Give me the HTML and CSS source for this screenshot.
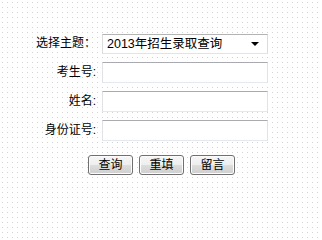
FILE: index.html
```
<!DOCTYPE html>
<html lang="zh-CN">
<head>
<meta charset="utf-8">
<title>录取查询</title>
<link rel="stylesheet" href="styles.css">
</head>
<body>
<form class="query">
  <div class="fields">
    <label class="lbl">选择主题：</label>
    <div class="select">
      <span class="select-text">2013年招生录取查询</span>
      <span class="arrow"></span>
    </div>
    <label class="lbl">考生号:</label>
    <input class="field" type="text">
    <label class="lbl">姓名:</label>
    <input class="field" type="text">
    <label class="lbl">身份证号:</label>
    <input class="field" type="text">
  </div>
  <div class="actions">
    <button type="button" class="btn">查询</button>
    <button type="button" class="btn">重填</button>
    <button type="button" class="btn">留言</button>
  </div>
</form>
</body>
</html>
```
FILE: styles.css
```
html, body {
  margin: 0;
  padding: 0;
  width: 322px;
  height: 202px;
  overflow: hidden;
}
body {
  background-color: #fff;
  background-image: conic-gradient(at 1px 1px, transparent 75%, #d2d2d2 0);
  background-size: 5px 5px;
  background-position: 2px 2px;
  font-family: "Liberation Sans", "Noto Sans CJK SC", sans-serif;
  font-size: 12px;
  color: #000;
}
.query {
  margin: 0;
  padding-top: 33px;
}
.fields {
  display: grid;
  grid-template-columns: 90px 166px;
  column-gap: 6px;
  row-gap: 8px;
  padding-left: 6px;
  align-items: center;
}
.lbl {
  text-align: right;
  line-height: 21px;
  white-space: nowrap;
}
.select, .field {
  box-sizing: border-box;
  height: 21px;
  width: 166px;
  margin: 0;
  border: 1px solid;
  border-color: #a9abb1 #e0e2e8 #e3e9ef #e0e2e8;
  background: #fff;
}
.select {
  display: flex;
  align-items: center;
  justify-content: space-between;
  padding: 0 8px 0 4px;
  border-color: #b3b3b3 #dcdcdc #e3e3e3 #dcdcdc;
  height: 20px;
}
.select-text {
  line-height: 18px;
  font-size: 12.5px;
}
.arrow {
  width: 0;
  height: 0;
  border-left: 4px solid transparent;
  border-right: 4px solid transparent;
  border-top: 4px solid #000;
  margin-top: 1px;
}
.field {
  padding: 0 3px;
  font: inherit;
  outline: none;
}
.actions {
  display: flex;
  justify-content: center;
  gap: 6px;
  margin-top: 14px;
  padding-left: 1px;
}
.btn {
  box-sizing: border-box;
  width: 45px;
  height: 20px;
  margin: 0;
  padding: 0;
  border: 1px solid #707070;
  border-radius: 3px;
  background: linear-gradient(#f6f6f6 0%, #eeeeee 50%, #dddddd 51%, #cfcfcf 100%);
  box-shadow: inset 0 0 0 1px #fcfcfc;
  font-family: "Liberation Sans", "Noto Sans CJK SC", sans-serif;
  font-size: 12px;
  line-height: 18px;
  color: #000;
}
```
